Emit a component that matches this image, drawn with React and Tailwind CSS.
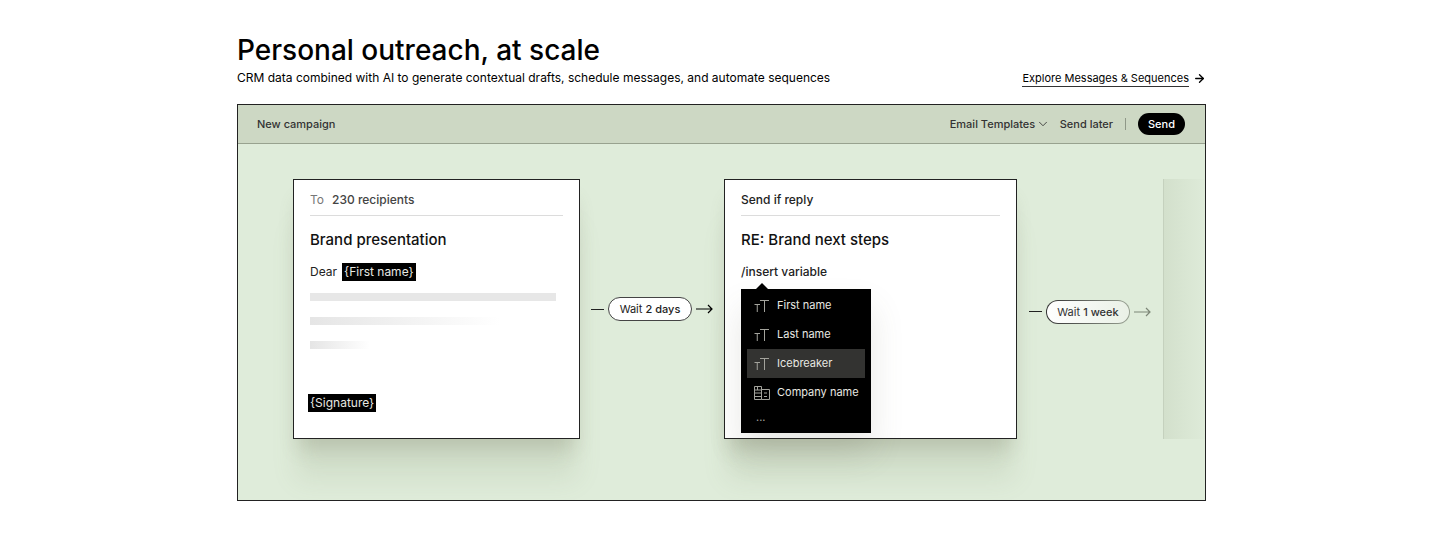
import React from 'react';
import { ArrowRight, ChevronDown } from 'lucide-react';

const VARIABLES = [
  { label: 'First name', icon: TextIcon },
  { label: 'Last name', icon: TextIcon },
  { label: 'Icebreaker', icon: TextIcon, active: true },
  { label: 'Company name', icon: CompanyIcon },
];

function TextIcon() {
  return (
    <svg width="16" height="14" viewBox="0 0 16 14" fill="none" stroke="#a3a39c" className="shrink-0" aria-hidden="true">
      <path d="M6 1.5h9M10.5 1.5V13M0.5 5.5h5.5M3.25 5.5V13" />
    </svg>
  );
}

function CompanyIcon() {
  return (
    <svg width="16" height="14" viewBox="0 0 16 14" fill="none" stroke="#a3a39c" className="shrink-0" aria-hidden="true">
      <path d="M0.5 0.5h7v13h-7zM7.5 3.5h8v10h-8M0.5 4h7M0.5 7h7M0.5 10.5h7M3.5 0.5v3.5M10 7h3M10 10.5h3" />
    </svg>
  );
}

function LongArrow() {
  return (
    <svg width="17" height="10" viewBox="0 0 17 10" fill="none" stroke="currentColor" strokeWidth="1.2" aria-hidden="true">
      <path d="M0 5h16M12 1l4 4-4 4" />
    </svg>
  );
}

function Chip({ children }) {
  return <span className="inline-block bg-black px-[2px] text-xs leading-[18px] text-[#e8e8e2]">{children}</span>;
}

function Card({ header, title, children }) {
  return (
    <div className="relative h-[260px] border border-[#222] bg-white px-4 shadow-[0_16px_18px_-6px_rgba(110,110,85,0.24),0_44px_24px_-4px_rgba(130,145,105,0.14)]">
      <div className="mt-3 border-b border-[#dcdcdc] pb-[7px] text-xs leading-4">{header}</div>
      <h3 className="mt-3 text-[15px] leading-6 font-medium text-[#111]">{title}</h3>
      {children}
    </div>
  );
}

function App() {
  return (
    <section className="mx-auto max-w-[972px] pt-8 pl-[3px] font-['Inter',sans-serif] text-black">
      <h2 className="text-[28px] leading-9 font-medium">Personal outreach, at scale</h2>
      <div className="flex h-5 items-center justify-between text-xs">
        <p>CRM data combined with AI to generate contextual drafts, schedule messages, and automate sequences</p>
        <a href="#messages" className="flex items-center gap-1 text-[11px]">
          <span className="border-b border-[#333] leading-4">Explore Messages &amp; Sequences</span>
          <ArrowRight size={13} strokeWidth={2.5} />
        </a>
      </div>

      <div className="mt-4 overflow-hidden border border-[#222] bg-[#dfecda]">
        {/* Toolbar */}
        <div className="flex h-[39px] items-center border-b border-[#98a28f] bg-[#cdd8c4] pr-5 pl-[19px] text-[11px] font-medium text-[#333]">
          <span>New campaign</span>
          <div className="ml-auto flex items-center">
            <div className="relative">
              <select aria-label="Email Templates" className="appearance-none bg-transparent pr-3">
                <option>Email Templates</option>
              </select>
              <ChevronDown size={14} strokeWidth={1.5} className="pointer-events-none absolute top-px -right-[2px]" />
            </div>
            <button className="ml-3">Send later</button>
            <span className="ml-3 h-3 w-px bg-[#8f9888]" />
            <button className="ml-3 h-[22px] rounded-full bg-black px-[10px] text-white">Send</button>
          </div>
        </div>

        {/* Sequence */}
        <div className="grid grid-cols-[287fr_144px_293fr_146px_42px] pt-[35px] pb-[61px] pl-[55px]">
          <Card
            header={
              <>
                <span className="mr-2 text-[#777]">To</span>
                <span className="font-medium text-[#444]">230 recipients</span>
              </>
            }
            title="Brand presentation"
          >
            <p className="mt-[11px] flex gap-[5px] text-xs leading-[18px]">
              <span className="text-[#222]">Dear</span>
              <Chip>{'{First name}'}</Chip>
            </p>
            <div className="mt-3 mr-[7px] h-2 bg-[#e7e7e7]" />
            <div className="mt-4 h-2 w-[190px] bg-linear-to-r from-[#e5e5e5] to-white" />
            <div className="mt-4 h-2 w-15 bg-linear-to-r from-[#e5e5e5] to-white" />
            <div className="mt-[45px] -ml-[2px] flex">
              <Chip>{'{Signature}'}</Chip>
            </div>
          </Card>

          <div className="flex items-center justify-center gap-1">
            <span className="h-px w-[13px] bg-[#222]" />
            <span className="rounded-full border border-[#444] bg-white px-[11px] text-[11px] leading-[22px] text-[#222]">
              Wait <span className="font-medium">2 days</span>
            </span>
            <LongArrow />
          </div>

          <Card header={<span className="font-medium text-[#222]">Send if reply</span>} title="RE: Brand next steps">
            <p className="mt-[11px] text-xs leading-[18px] font-medium text-[#222]">/insert variable</p>
            <div className="absolute top-[109px] left-4 h-36 w-[130px] bg-black px-[6px] pt-[2px] shadow-[0_20px_32px_rgba(90,90,70,0.14)]">
              <svg width="12" height="6" viewBox="0 0 12 6" className="absolute -top-[6px] left-[15px]" aria-hidden="true">
                <path d="M0 6l6-6 6 6z" />
              </svg>
              {VARIABLES.map(({ label, icon: Icon, active }) => (
                <button
                  key={label}
                  className={`flex h-[29px] w-full items-center gap-[7px] pl-[7px] text-[11px] whitespace-nowrap text-[#e8e8e2] ${
                    active ? 'bg-[#333331]' : ''
                  }`}
                >
                  <Icon />
                  {label}
                </button>
              ))}
              <p className="pl-[9px] text-[11px] leading-5 text-[#a3a39c]">...</p>
            </div>
          </Card>

          <div className="mt-[5px] flex items-center justify-center gap-1">
            <span className="h-px w-[13px] bg-[#222]" />
            <span className="rounded-full bg-linear-to-r from-[#333] to-[#9aa394] p-px">
              <span className="block rounded-full bg-linear-to-r from-white to-[#eaf1e6] px-[10px] text-[11px] leading-[22px] text-[#333]">
                Wait <span className="font-medium">1 week</span>
              </span>
            </span>
            <span className="text-[#7d8677]">
              <LongArrow />
            </span>
          </div>

          <div className="border-l border-[#c5d1be] bg-linear-to-r from-[#d3e0cc] to-[#deebd9]" />
        </div>
      </div>
    </section>
  );
}

export default App;
